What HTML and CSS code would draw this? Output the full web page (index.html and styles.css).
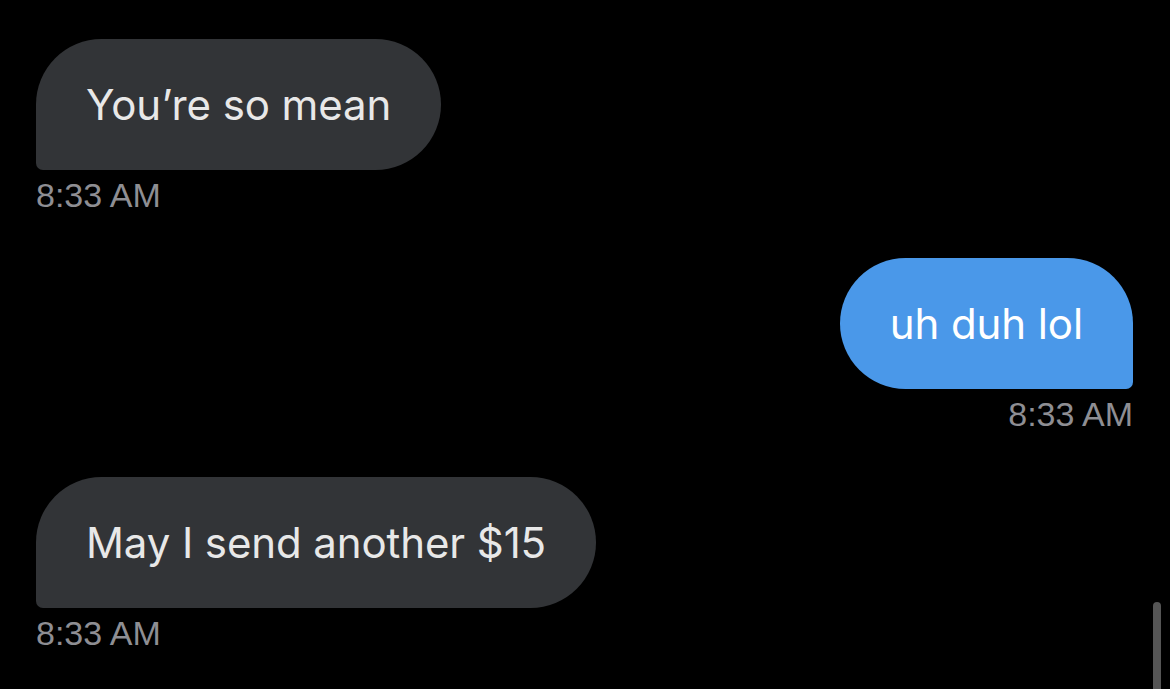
FILE: index.html
```html
<!DOCTYPE html>
<html lang="en">
<head>
    <meta charset="UTF-8">
    <meta name="viewport" content="width=device-width, initial-scale=1.0">
    <title>Messages</title>
    <link rel="stylesheet" href="styles.css">
</head>
<body>
    <div class="thread">
        <div class="msg received">
            <div class="bubble">You’re so mean</div>
            <div class="time">8:33 AM</div>
        </div>

        <div class="msg sent">
            <div class="bubble">uh duh lol</div>
            <div class="time">8:33 AM</div>
        </div>

        <div class="msg received">
            <div class="bubble">May I send another $15</div>
            <div class="time">8:33 AM</div>
        </div>
    </div>

    <!-- scroll indicator -->
    <div class="scrollbar"></div>
</body>
</html>
```

FILE: styles.css
```css
html, body {
    margin: 0;
    height: 100%;
    background-color: #000;
    overflow: hidden;
}
body {
    font-family: Inter, "Noto Sans", sans-serif;
    position: relative;
}
.thread {
    display: flex;
    flex-direction: column;
    gap: 46px;
    padding: 39px 37px 0 36px;
}
.msg {
    display: flex;
    flex-direction: column;
    gap: 8px;
}
.msg.received {
    align-items: flex-start;
}
.msg.sent {
    align-items: flex-end;
}
.bubble {
    height: 131px;
    box-sizing: border-box;
    display: flex;
    align-items: center;
    padding: 0 50px;
    font-size: 42px;
    letter-spacing: -0.1px;
    border-radius: 66px;
}
.received .bubble {
    background-color: #323437;
    color: #e8e8e8;
    border-bottom-left-radius: 7px;
}
.sent .bubble {
    background-color: #4a98e9;
    color: #fff;
    border-bottom-right-radius: 7px;
}
.time {
    font-family: "Liberation Sans", Arial, sans-serif;
    font-size: 34px;
    line-height: 34px;
    color: #8e8e93;
}
.scrollbar {
    position: absolute;
    right: 9px;
    bottom: 0;
    width: 8px;
    height: 87px;
    border-radius: 4px 4px 0 0;
    background-color: #555;
}
```
